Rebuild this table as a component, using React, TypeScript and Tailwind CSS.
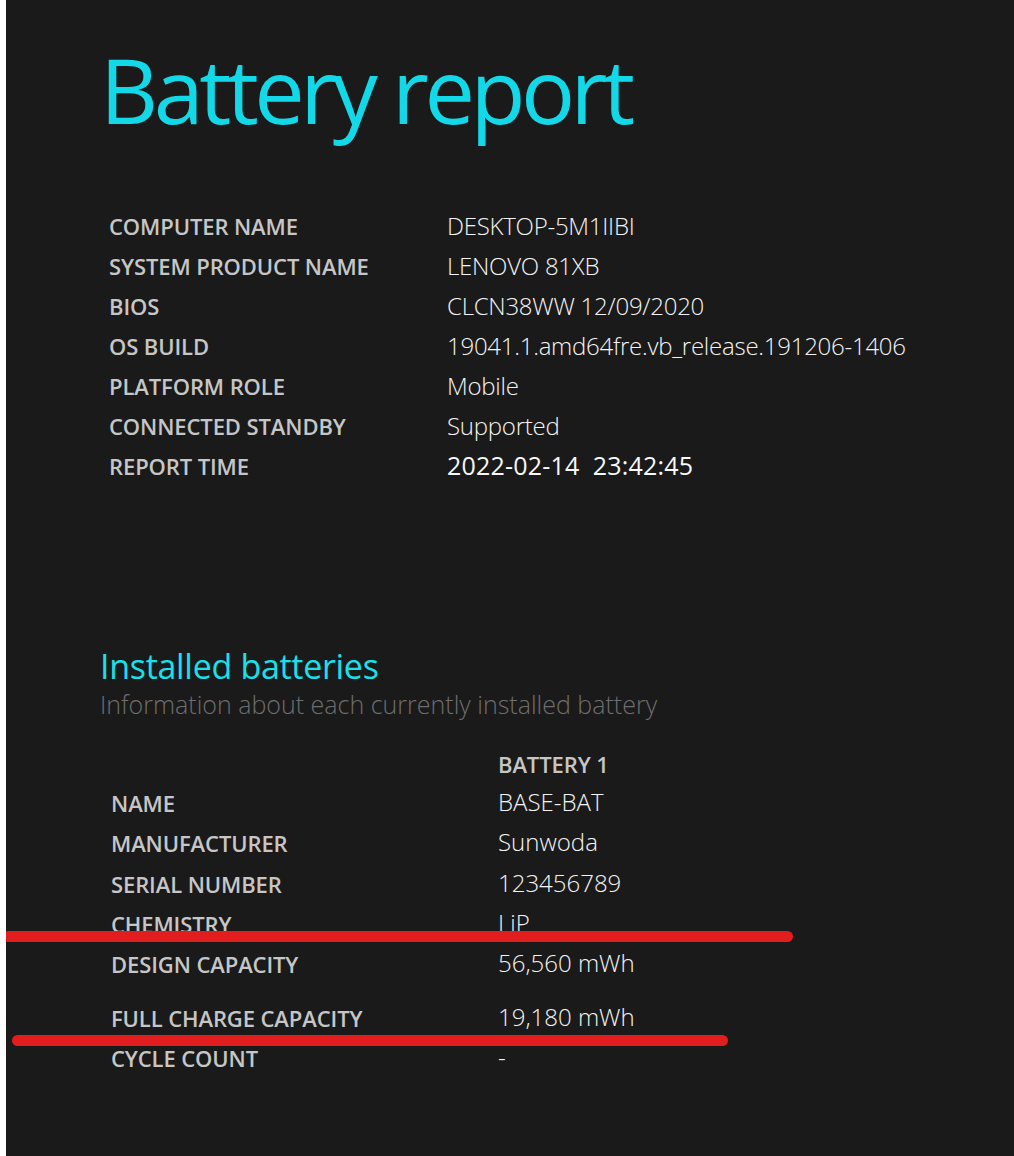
import React from "react";

const sys: [string, string][] = [
  ["COMPUTER NAME", "DESKTOP-5M1IIBI"],
  ["SYSTEM PRODUCT NAME", "LENOVO 81XB"],
  ["BIOS", "CLCN38WW 12/09/2020"],
  ["OS BUILD", "19041.1.amd64fre.vb_release.191206-1406"],
  ["PLATFORM ROLE", "Mobile"],
  ["CONNECTED STANDBY", "Supported"],
];

const bat: [string, string, string][] = [
  ["NAME", "BASE-BAT", "h-[40px]"],
  ["MANUFACTURER", "Sunwoda", "h-[41px]"],
  ["SERIAL NUMBER", "123456789", "h-[40px]"],
  ["CHEMISTRY", "LiP", "h-[40px]"],
  ["DESIGN CAPACITY", "56,560 mWh", "h-[54px]"],
  ["FULL CHARGE CAPACITY", "19,180 mWh", "h-[40px]"],
  ["CYCLE COUNT", "-", "h-[40px]"],
];

export default function App() {
  return (
    <div
      className="relative h-[1156px] w-[1014px] overflow-hidden border-l-[6px] border-white bg-[#1a1a1a]"
      style={{ fontFamily: '"Open Sans", "Noto Sans", sans-serif' }}
    >
      <div className="pl-[94px] pt-[24px]">
        <h1 className="text-[90px] font-normal leading-[130px] tracking-[-4.5px] text-[#13d8e8]">
          Battery report
        </h1>
        <div className="mt-[52px] pl-[9px]">
          {sys.map(([k, v]) => (
            <div key={k} className="flex h-[40px] items-center">
              <div className="w-[338px] text-[22px] font-semibold tracking-[-0.1px] text-[#c6c6c6]">
                {k}
              </div>
              <div className="text-[24px] font-light tracking-[-0.25px] text-[#f4f4f4]">{v}</div>
            </div>
          ))}
          <div className="flex h-[40px] items-center">
            <div className="w-[338px] text-[22px] font-semibold tracking-[-0.1px] text-[#c6c6c6]">
              REPORT TIME
            </div>
            <div className="whitespace-pre text-[25px] font-normal tracking-[0.2px] text-[#f8f8f8]">
              {"2022-02-14  23:42:45"}
            </div>
          </div>
        </div>

        <div className="mt-[160px]">
          <h2 className="text-[34px] font-normal leading-[40px] tracking-[-0.3px] text-[#19e0ea]">
            Installed batteries
          </h2>
          <p className="text-[25px] font-light leading-[36px] tracking-[0px] text-[#6e6e6e]">
            Information about each currently installed battery
          </p>
        </div>

        <div className="mt-[24px] pl-[11px]">
          <div className="flex h-[36px] items-center">
            <div className="w-[387px]" />
            <div className="text-[22px] font-semibold tracking-[-0.1px] text-[#c6c6c6]">BATTERY 1</div>
          </div>
          {bat.map(([k, v, h]) => (
            <div key={k} className={`flex items-start ${h}`}>
              <div className="w-[387px] pt-[5px] text-[22px] font-semibold tracking-[-0.1px] text-[#c6c6c6]">
                {k}
              </div>
              <div className="pt-[2px] text-[24px] font-light tracking-[0px] text-[#f4f4f4]">{v}</div>
            </div>
          ))}
        </div>
      </div>

      <div className="absolute left-[-3px] top-[931px] h-[11px] w-[790px] rounded-full bg-[#e21d1d]" />
      <div className="absolute left-[6px] top-[1035px] h-[11px] w-[716px] rounded-full bg-[#e21d1d]" />
    </div>
  );
}
